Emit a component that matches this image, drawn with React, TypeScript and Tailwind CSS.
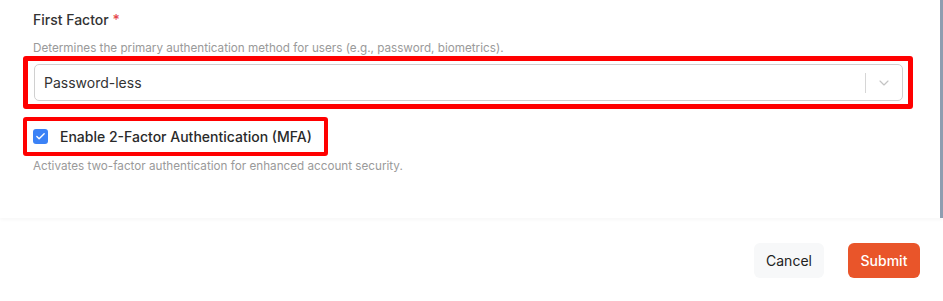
import React, { useState } from 'react';
import { ChevronDown, Check } from 'lucide-react';

const App: React.FC = () => {
  const [mfa, setMfa] = useState(true);

  return (
    <div className="w-[943px] h-[301px] bg-white flex flex-col overflow-hidden font-['Inter',sans-serif] text-[#333]">
      {/* Scrollable form body */}
      <div className="h-[218px] flex shadow-[0_2px_3px_rgba(0,0,0,0.03)]">
        <div className="flex-1 pl-[33px] pr-[37px] pt-[10px]">
          <div className="text-[14px] leading-[20px] font-medium">
            First Factor <span className="text-[#e5484d]">*</span>
          </div>
          <p className="mt-[10px] text-[11.7px] leading-[16px] text-[#9a9a9a]">
            Determines the primary authentication method for users (e.g., password, biometrics).
          </p>

          {/* Select, highlighted */}
          <div className="mt-0 -ml-[10px] -mr-[10px] border-[5px] border-[#ff0000] rounded-[3px] pl-[6px] pr-[5px] py-[3px]">
            <div className="h-[37px] flex items-center border border-[#d0d0d0] rounded-[5px] bg-white">
              <span className="flex-1 pl-[9px] text-[14px] text-[#333]">Password-less</span>
              <div className="w-px h-[20px] bg-[#d6d6d6]" />
              <div className="w-[36px] flex justify-center text-[#c4c4c4]">
                <ChevronDown size={16} strokeWidth={1.75} />
              </div>
            </div>
          </div>

          {/* Checkbox, highlighted */}
          <div className="mt-[8px] -ml-[10px] inline-flex items-center gap-[12px] h-[39px] border-[4px] border-[#ff0000] rounded-[3px] pl-[6px] pr-[12px]">
            <button
              type="button"
              onClick={() => setMfa(!mfa)}
              className={`w-[15px] h-[15px] rounded-[3px] flex items-center justify-center ${mfa ? 'bg-[#3b82f6]' : 'border border-[#999] bg-white'}`}
            >
              {mfa && <Check size={11} strokeWidth={3} className="text-white" />}
            </button>
            <span className="text-[14px] font-medium text-[#2a2a2a]">Enable 2-Factor Authentication (MFA)</span>
          </div>
          <p className="mt-[2px] text-[11.7px] leading-[16px] text-[#9a9a9a]">
            Activates two-factor authentication for enhanced account security.
          </p>
        </div>
        <div className="w-[3px] bg-[#8e9db0]" />
      </div>

      {/* Footer */}
      <div className="flex-1 flex items-center justify-end gap-[24px] pr-[23px] pt-[2px]">
        <button type="button" className="h-[35px] w-[70px] rounded-[6px] bg-[#f7f8f9] text-[14px] text-[#222]">
          Cancel
        </button>
        <button type="button" className="h-[35px] w-[72px] rounded-[6px] bg-[#e9552a] text-[14px] font-medium text-white">
          Submit
        </button>
      </div>
    </div>
  );
};

export default App;
